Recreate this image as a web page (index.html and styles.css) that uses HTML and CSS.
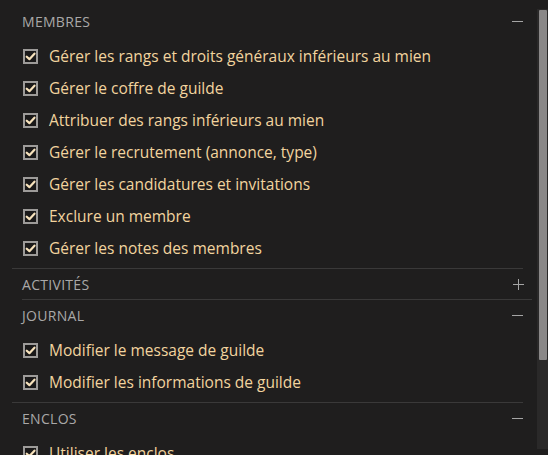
FILE: index.html
```html
<!DOCTYPE html>
<html lang="fr">
<head>
<meta charset="utf-8">
<link rel="stylesheet" href="styles.css">
</head>
<body>
<div class="page">
  <div class="content">
    <section class="section open">
      <div class="head"><span class="title">Membres</span><span class="toggle minus"></span></div>
      <ul class="perms">
        <li><span class="cb"><svg viewBox="0 0 10 10"><path d="M1.6 5.2 L4 7.4 L8.6 2.4"/></svg></span>Gérer les rangs et droits généraux inférieurs au mien</li>
        <li><span class="cb"><svg viewBox="0 0 10 10"><path d="M1.6 5.2 L4 7.4 L8.6 2.4"/></svg></span>Gérer le coffre de guilde</li>
        <li><span class="cb"><svg viewBox="0 0 10 10"><path d="M1.6 5.2 L4 7.4 L8.6 2.4"/></svg></span>Attribuer des rangs inférieurs au mien</li>
        <li><span class="cb"><svg viewBox="0 0 10 10"><path d="M1.6 5.2 L4 7.4 L8.6 2.4"/></svg></span>Gérer le recrutement (annonce, type)</li>
        <li><span class="cb"><svg viewBox="0 0 10 10"><path d="M1.6 5.2 L4 7.4 L8.6 2.4"/></svg></span>Gérer les candidatures et invitations</li>
        <li><span class="cb"><svg viewBox="0 0 10 10"><path d="M1.6 5.2 L4 7.4 L8.6 2.4"/></svg></span>Exclure un membre</li>
        <li><span class="cb"><svg viewBox="0 0 10 10"><path d="M1.6 5.2 L4 7.4 L8.6 2.4"/></svg></span>Gérer les notes des membres</li>
      </ul>
    </section>
    <section class="section closed">
      <div class="head"><span class="title">Activités</span><span class="toggle plus"></span></div>
    </section>
    <section class="section open">
      <div class="head"><span class="title">Journal</span><span class="toggle minus"></span></div>
      <ul class="perms">
        <li><span class="cb"><svg viewBox="0 0 10 10"><path d="M1.6 5.2 L4 7.4 L8.6 2.4"/></svg></span>Modifier le message de guilde</li>
        <li><span class="cb"><svg viewBox="0 0 10 10"><path d="M1.6 5.2 L4 7.4 L8.6 2.4"/></svg></span>Modifier les informations de guilde</li>
      </ul>
    </section>
    <section class="section open last">
      <div class="head"><span class="title">Enclos</span><span class="toggle minus"></span></div>
      <ul class="perms">
        <li><span class="cb"><svg viewBox="0 0 10 10"><path d="M1.6 5.2 L4 7.4 L8.6 2.4"/></svg></span>Utiliser les enclos</li>
      </ul>
    </section>
  </div>
  <div class="scrollbar"><div class="thumb"></div></div>
</div>
</body>
</html>
```

FILE: styles.css
```css
* { box-sizing: border-box; }
html, body { margin: 0; padding: 0; }
body {
  background: #1f1e1e;
  font-family: "Open Sans", "Noto Sans", sans-serif;
  width: 548px;
  height: 455px;
  overflow: hidden;
}
.page {
  display: flex;
  height: 455px;
}
.content {
  flex: 1;
  padding: 6px 0 0 12px;
  overflow: hidden;
}
.section { border-bottom: 1px solid #3a3939; }
.section.open { margin-right: 14px; }
.section.closed { margin-left: 10px; margin-right: 5px; }
.section.last { border-bottom: none; }
.head {
  height: 30px;
  display: flex;
  align-items: center;
  justify-content: space-between;
  padding: 0 0 0 10px;
}
.section.closed .head { padding-left: 0; padding-right: 8px; }
.title {
  text-transform: uppercase;
  color: #a9a8a8;
  font-size: 14px;
  letter-spacing: 0.3px;
}
.toggle {
  width: 11px;
  height: 11px;
  position: relative;
}
.toggle::before, .plus::after {
  content: "";
  position: absolute;
  background: #a5a5a5;
}
.toggle::before { left: 0; right: 0; top: 5px; height: 1.3px; }
.plus::after { top: 0; bottom: 0; left: 5px; width: 1.3px; }
.perms {
  list-style: none;
  margin: 0;
  padding: 4px 0 4px 11px;
}
.perms li {
  height: 32px;
  display: flex;
  align-items: center;
  gap: 11px;
  color: #f2d49e;
  font-size: 15.5px;
}
.cb {
  width: 15px;
  height: 15px;
  border: 2px solid #9d9b99;
  background: #1a1919;
  display: flex;
  align-items: center;
  justify-content: center;
  flex: none;
}
.cb svg { width: 11px; height: 11px; }
.cb path {
  fill: none;
  stroke: #f7e2bb;
  stroke-width: 2;
  stroke-linecap: round;
  stroke-linejoin: round;
}
.scrollbar {
  width: 11px;
  flex: none;
  margin-top: 9px;
  margin-bottom: 6px;
  background: #2a2929;
  padding: 1px 1px 0 2px;
}
.thumb {
  height: 350px;
  background: #8a8888;
  border-radius: 1px;
}
```
